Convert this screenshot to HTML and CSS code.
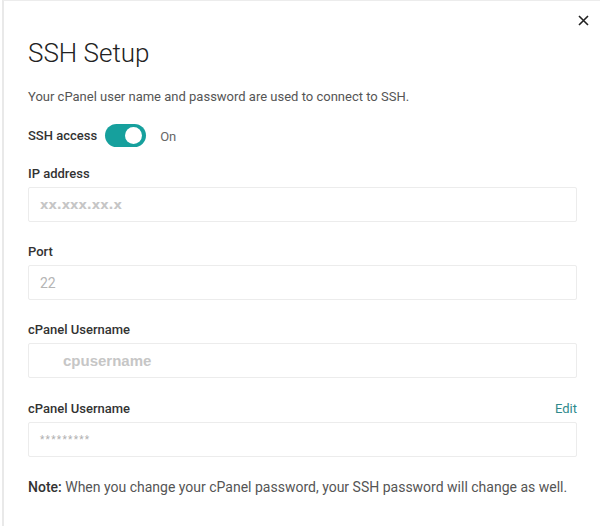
FILE: index.html
```
<!DOCTYPE html>
<html lang="en">
<head>
    <meta charset="UTF-8">
    <meta name="viewport" content="width=device-width, initial-scale=1.0">
    <title>SSH Setup</title>
    <link rel="stylesheet" href="styles.css">
</head>
<body>

<div class="modal">
    <button class="close-btn" aria-label="Close">
        <svg width="11" height="11" viewBox="0 0 11 11"><path d="M1 1L10 10M10 1L1 10" stroke="#222" stroke-width="1.6" fill="none"/></svg>
    </button>

    <h1 class="title">SSH Setup</h1>
    <p class="intro">Your cPanel user name and password are used to connect to SSH.</p>

    <div class="access-row">
        <span class="label">SSH access</span>
        <span class="toggle"><span class="knob"></span></span>
        <span class="toggle-text">On</span>
    </div>

    <div class="field">
        <div class="field-head"><span class="label">IP address</span></div>
        <div class="input"><span class="value ip">xx.xxx.xx.x</span></div>
    </div>

    <div class="field">
        <div class="field-head"><span class="label">Port</span></div>
        <div class="input"><span class="value port">22</span></div>
    </div>

    <div class="field">
        <div class="field-head"><span class="label">cPanel Username</span></div>
        <div class="input"><span class="value user">cpusername</span></div>
    </div>

    <div class="field">
        <div class="field-head">
            <span class="label">cPanel Username</span>
            <a class="edit-link" href="#">Edit</a>
        </div>
        <div class="input"><span class="value pass">*********</span></div>
    </div>

    <p class="note"><strong>Note:</strong> When you change your cPanel password, your SSH password will change as well.</p>
</div>

</body>
</html>
```

FILE: styles.css
```
body {
    margin: 0;
    background-color: #ffffff;
    font-family: Roboto, "Liberation Sans", sans-serif;
    color: #333333;
}
.modal {
    position: relative;
    height: 526px;
    box-sizing: border-box;
    margin-left: 2px;
    border-left: 2px solid #e9e9e9;
    border-top: 1px solid #ececec;
    padding: 34px 23px 0 24px;
}
.close-btn {
    position: absolute;
    top: 11px;
    right: 9px;
    background: none;
    border: none;
    padding: 2px;
    cursor: pointer;
}
.title {
    margin: 0;
    font-size: 26px;
    font-weight: 300;
    color: #222222;
    line-height: 36px;
}
.intro {
    margin: 17px 0 0;
    font-size: 13px;
    color: #555555;
    line-height: 18px;
}
.access-row {
    display: flex;
    align-items: center;
    margin-top: 17px;
    height: 24px;
}
.label {
    font-size: 13px;
    font-weight: 500;
    color: #333333;
}
.toggle {
    position: relative;
    width: 41px;
    height: 23px;
    border-radius: 12px;
    background-color: #16a09d;
    margin-left: 8px;
}
.knob {
    position: absolute;
    top: 3px;
    right: 4px;
    width: 17px;
    height: 17px;
    border-radius: 50%;
    background-color: #ffffff;
}
.toggle-text {
    margin-left: 14px;
    font-size: 13px;
    color: #666666;
    padding-top: 3px;
}
.access-row + .field {
    margin-top: 19px;
}
.field + .field {
    margin-top: 22px;
}
.field:last-of-type {
    margin-top: 23px;
}
.field-head {
    display: flex;
    justify-content: space-between;
    align-items: baseline;
    height: 20px;
    margin-bottom: 1px;
}
.edit-link {
    font-size: 13px;
    color: #2f8a8c;
    text-decoration: none;
}
.input {
    height: 35px;
    box-sizing: border-box;
    border: 1px solid #ececec;
    border-radius: 2px;
    display: flex;
    align-items: center;
    padding-left: 11px;
}
.value {
    color: #bdbdbd;
}
.ip {
    font-family: "DejaVu Sans", sans-serif;
    font-size: 13px;
    font-weight: 700;
    color: #c6c6c6;
}
.port {
    font-size: 14px;
    color: #b5b5b5;
}
.user {
    font-family: "Liberation Sans", Arial, sans-serif;
    font-size: 15px;
    font-weight: 700;
    color: #c6c6c6;
    margin-left: 23px;
}
.pass {
    font-size: 10px;
    color: #b0b0b0;
    letter-spacing: 1.3px;
}
.note {
    margin: 22px 0 0;
    font-size: 14px;
    color: #555555;
}
.note strong {
    color: #333333;
    font-weight: 500;
}
```
